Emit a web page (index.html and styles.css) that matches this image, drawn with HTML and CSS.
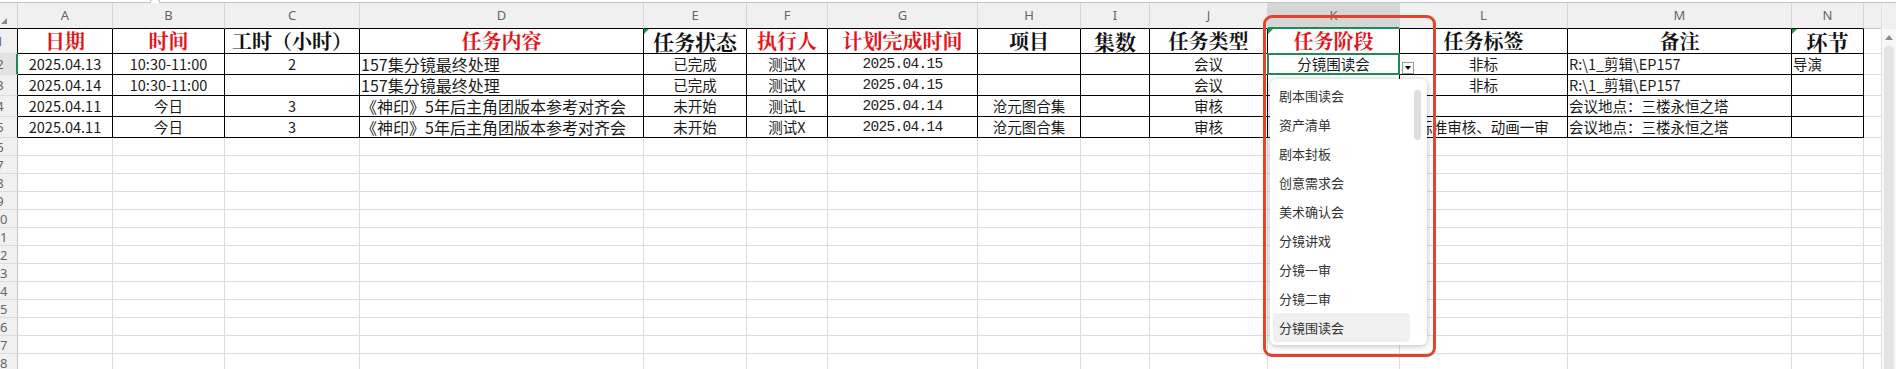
FILE: index.html
```html
<!DOCTYPE html>
<html lang="zh-CN">
<head>
<meta charset="utf-8">
<title>任务表</title>
<link rel="stylesheet" href="styles.css">
</head>
<body>
<div class="app">
  <div class="formula-edge"><span class="notch"></span></div>
  <div class="main">
    <div class="sheet">
      <!-- column header -->
      <div class="corner"><span class="corner-tri"></span></div>
      <div class="ch t">A</div><div class="ch t">B</div><div class="ch t">C</div><div class="ch t">D</div>
      <div class="ch t">E</div><div class="ch t">F</div><div class="ch t">G</div><div class="ch t">H</div>
      <div class="ch t">I</div><div class="ch t">J</div><div class="ch t sel">K</div><div class="ch t">L</div>
      <div class="ch t">M</div><div class="ch t">N</div><div class="ch fill"></div>

      <!-- row 1 -->
      <div class="rh t"><span>1</span></div>
      <div class="c t hd red">日期</div>
      <div class="c t hd red">时间</div>
      <div class="c t hd">工时（小时）</div>
      <div class="c t hd red">任务内容</div>
      <div class="c t hd big flag">任务状态</div>
      <div class="c t hd red">执行人</div>
      <div class="c t hd red">计划完成时间</div>
      <div class="c t hd">项目</div>
      <div class="c t hd big">集数</div>
      <div class="c t hd">任务类型</div>
      <div class="c t hd red flag selcol">任务阶段</div>
      <div class="c t hd">任务标签</div>
      <div class="c t hd">备注</div>
      <div class="c t hd big flag">环节</div>
      <div class="c fill"></div>

      <!-- row 2 -->
      <div class="rh t selrow"><span>2</span></div>
      <div class="c t d">2025.04.13</div>
      <div class="c t d">10:30-11:00</div>
      <div class="c t d">2</div>
      <div class="c t d left wide">157集分镜最终处理</div>
      <div class="c t d">已完成</div>
      <div class="c t d">测试X</div>
      <div class="c t d mono">2025.04.15</div>
      <div class="c t d"></div>
      <div class="c t d"></div>
      <div class="c t d">会议</div>
      <div class="c t d active">分镜围读会
        <span class="dd-btn"><span class="dd-caret"></span></span>
        <div class="dd-list">
          <div class="dd-item">剧本围读会</div>
          <div class="dd-item">资产清单</div>
          <div class="dd-item">剧本封板</div>
          <div class="dd-item">创意需求会</div>
          <div class="dd-item">美术确认会</div>
          <div class="dd-item">分镜讲戏</div>
          <div class="dd-item">分镜一审</div>
          <div class="dd-item">分镜二审</div>
          <div class="dd-item on">分镜围读会</div>
          <span class="dd-thumb"></span>
        </div>
      </div>
      <div class="c t d">非标</div>
      <div class="c t d left">R:\1_剪辑\EP157</div>
      <div class="c t d left">导演</div>
      <div class="c fill"></div>

      <!-- row 3 -->
      <div class="rh t"><span>3</span></div>
      <div class="c t d">2025.04.14</div>
      <div class="c t d">10:30-11:00</div>
      <div class="c t d"></div>
      <div class="c t d left wide">157集分镜最终处理</div>
      <div class="c t d">已完成</div>
      <div class="c t d">测试X</div>
      <div class="c t d mono">2025.04.15</div>
      <div class="c t d"></div>
      <div class="c t d"></div>
      <div class="c t d">会议</div>
      <div class="c t d"></div>
      <div class="c t d">非标</div>
      <div class="c t d left">R:\1_剪辑\EP157</div>
      <div class="c t d left"></div>
      <div class="c fill"></div>

      <!-- row 4 -->
      <div class="rh t"><span>4</span></div>
      <div class="c t d">2025.04.11</div>
      <div class="c t d">今日</div>
      <div class="c t d">3</div>
      <div class="c t d left wide">《神印》5年后主角团版本参考对齐会</div>
      <div class="c t d">未开始</div>
      <div class="c t d">测试L</div>
      <div class="c t d mono">2025.04.14</div>
      <div class="c t d">沧元图合集</div>
      <div class="c t d"></div>
      <div class="c t d">审核</div>
      <div class="c t d"></div>
      <div class="c t d"></div>
      <div class="c t d left">会议地点：三楼永恒之塔</div>
      <div class="c t d left"></div>
      <div class="c fill"></div>

      <!-- row 5 -->
      <div class="rh t"><span>5</span></div>
      <div class="c t d">2025.04.11</div>
      <div class="c t d">今日</div>
      <div class="c t d">3</div>
      <div class="c t d left wide">《神印》5年后主角团版本参考对齐会</div>
      <div class="c t d">未开始</div>
      <div class="c t d">测试X</div>
      <div class="c t d mono">2025.04.14</div>
      <div class="c t d">沧元图合集</div>
      <div class="c t d"></div>
      <div class="c t d">审核</div>
      <div class="c t d"></div>
      <div class="c t d">标准审核、动画一审</div>
      <div class="c t d left">会议地点：三楼永恒之塔</div>
      <div class="c t d left"></div>
      <div class="c fill"></div>

      <!-- empty rows 6-18 -->
      <div class="rh"><span>6</span></div><div class="c"></div><div class="c"></div><div class="c"></div><div class="c"></div><div class="c"></div><div class="c"></div><div class="c"></div><div class="c"></div><div class="c"></div><div class="c"></div><div class="c"></div><div class="c"></div><div class="c"></div><div class="c"></div><div class="c fill"></div>
      <div class="rh"><span>7</span></div><div class="c"></div><div class="c"></div><div class="c"></div><div class="c"></div><div class="c"></div><div class="c"></div><div class="c"></div><div class="c"></div><div class="c"></div><div class="c"></div><div class="c"></div><div class="c"></div><div class="c"></div><div class="c"></div><div class="c fill"></div>
      <div class="rh"><span>8</span></div><div class="c"></div><div class="c"></div><div class="c"></div><div class="c"></div><div class="c"></div><div class="c"></div><div class="c"></div><div class="c"></div><div class="c"></div><div class="c"></div><div class="c"></div><div class="c"></div><div class="c"></div><div class="c"></div><div class="c fill"></div>
      <div class="rh"><span>9</span></div><div class="c"></div><div class="c"></div><div class="c"></div><div class="c"></div><div class="c"></div><div class="c"></div><div class="c"></div><div class="c"></div><div class="c"></div><div class="c"></div><div class="c"></div><div class="c"></div><div class="c"></div><div class="c"></div><div class="c fill"></div>
      <div class="rh"><span>10</span></div><div class="c"></div><div class="c"></div><div class="c"></div><div class="c"></div><div class="c"></div><div class="c"></div><div class="c"></div><div class="c"></div><div class="c"></div><div class="c"></div><div class="c"></div><div class="c"></div><div class="c"></div><div class="c"></div><div class="c fill"></div>
      <div class="rh"><span>11</span></div><div class="c"></div><div class="c"></div><div class="c"></div><div class="c"></div><div class="c"></div><div class="c"></div><div class="c"></div><div class="c"></div><div class="c"></div><div class="c"></div><div class="c"></div><div class="c"></div><div class="c"></div><div class="c"></div><div class="c fill"></div>
      <div class="rh"><span>12</span></div><div class="c"></div><div class="c"></div><div class="c"></div><div class="c"></div><div class="c"></div><div class="c"></div><div class="c"></div><div class="c"></div><div class="c"></div><div class="c"></div><div class="c"></div><div class="c"></div><div class="c"></div><div class="c"></div><div class="c fill"></div>
      <div class="rh"><span>13</span></div><div class="c"></div><div class="c"></div><div class="c"></div><div class="c"></div><div class="c"></div><div class="c"></div><div class="c"></div><div class="c"></div><div class="c"></div><div class="c"></div><div class="c"></div><div class="c"></div><div class="c"></div><div class="c"></div><div class="c fill"></div>
      <div class="rh"><span>14</span></div><div class="c"></div><div class="c"></div><div class="c"></div><div class="c"></div><div class="c"></div><div class="c"></div><div class="c"></div><div class="c"></div><div class="c"></div><div class="c"></div><div class="c"></div><div class="c"></div><div class="c"></div><div class="c"></div><div class="c fill"></div>
      <div class="rh"><span>15</span></div><div class="c"></div><div class="c"></div><div class="c"></div><div class="c"></div><div class="c"></div><div class="c"></div><div class="c"></div><div class="c"></div><div class="c"></div><div class="c"></div><div class="c"></div><div class="c"></div><div class="c"></div><div class="c"></div><div class="c fill"></div>
      <div class="rh"><span>16</span></div><div class="c"></div><div class="c"></div><div class="c"></div><div class="c"></div><div class="c"></div><div class="c"></div><div class="c"></div><div class="c"></div><div class="c"></div><div class="c"></div><div class="c"></div><div class="c"></div><div class="c"></div><div class="c"></div><div class="c fill"></div>
      <div class="rh"><span>17</span></div><div class="c"></div><div class="c"></div><div class="c"></div><div class="c"></div><div class="c"></div><div class="c"></div><div class="c"></div><div class="c"></div><div class="c"></div><div class="c"></div><div class="c"></div><div class="c"></div><div class="c"></div><div class="c"></div><div class="c fill"></div>
      <div class="rh"><span>18</span></div><div class="c"></div><div class="c"></div><div class="c"></div><div class="c"></div><div class="c"></div><div class="c"></div><div class="c"></div><div class="c"></div><div class="c"></div><div class="c"></div><div class="c"></div><div class="c"></div><div class="c"></div><div class="c"></div><div class="c fill"></div>
    </div>
    <div class="vscroll">
      <div class="vs-head"></div>
      <div class="vs-track">
        <span class="vs-up"></span>
        <span class="vs-thumb"></span>
      </div>
    </div>
  </div>
  <div class="annotation"></div>
</div>
</body>
</html>
```

FILE: styles.css
```css
* { box-sizing: border-box; }
html, body { margin: 0; padding: 0; background: #fff; }
body {
  width: 1896px;
  height: 369px;
  overflow: hidden;
  font-family: "Noto Sans CJK SC", "Noto Sans", sans-serif;
  color: #111;
}

.app {
  position: relative;
  display: flex;
  flex-direction: column;
  height: 369px;
}

.formula-edge {
  position: relative;
  height: 3px;
  border-bottom: 1px solid #c4c4c4;
  background: #fff;
}
.notch {
  position: absolute;
  left: 150px;
  top: -1px;
  width: 10px;
  height: 4px;
  border-left: 1px solid #c4c4c4;
  border-right: 1px solid #c4c4c4;
  border-top: 1px solid #c4c4c4;
  border-radius: 3px 3px 0 0;
  background: #fff;
}

.main {
  display: flex;
  flex: 1;
  min-height: 0;
}

.sheet {
  flex: 1;
  display: grid;
  grid-template-columns: 18px 95px 112px 135px 284px 103px 81px 150px 103px 69px 118px 132px 168px 224px 72px 1fr;
  grid-template-rows: 26px 25px repeat(4, 21px) repeat(13, 18px);
  overflow: hidden;
}

/* headers */
.corner {
  position: relative;
  background: #f0f0f0;
  border-right: 1px solid #d0d0d0;
  border-bottom: 1px solid #000;
}
.corner-tri {
  position: absolute;
  left: 1px;
  bottom: 4px;
  width: 0;
  height: 0;
  border-left: 6px solid transparent;
  border-bottom: 6px solid #8a8a8a;
}
.ch {
  background: #f0f0f0;
  border-right: 1px solid #d6d6d6;
  border-bottom: 1px solid #c8c8c8;
  color: #666;
  font-family: "Noto Sans", "Noto Sans CJK SC", sans-serif;
  font-size: 13px;
  line-height: 25px;
  text-align: center;
}
.ch.t { border-bottom-color: #000; }
.ch.sel {
  background: #d6d6d6;
  border-bottom: 2px solid #1f8a55;
}
.ch.fill { border-right: none; }

.rh {
  background: #f0f0f0;
  border-right: 1px solid #c8c8c8;
  border-bottom: 1px solid #dcdcdc;
  color: #666;
  font-family: "Noto Sans", sans-serif;
  font-size: 13px;
  overflow: hidden;
  display: flex;
  align-items: center;
}
.rh span {
  flex: none;
  width: 30px;
  margin-left: -15px;
  text-align: center;
}
.rh.t { border-right-color: #000; border-bottom-color: #dcdcdc; }
.rh.selrow {
  background: #e2e2e2;
  border-right: 2px solid #1f8a55;
}

/* cells */
.c {
  position: relative;
  border-right: 1px solid #dcdcdc;
  border-bottom: 1px solid #dcdcdc;
  white-space: nowrap;
  text-align: center;
}
.c.t {
  border-right-color: #000;
  border-bottom-color: #000;
}
.c.fill { border-right: none; }

.hd {
  font-family: "Noto Serif CJK SC", "Noto Sans CJK SC", serif;
  font-weight: 700;
  font-size: 20px;
  line-height: 24px;
  color: #111;
}
.hd.big { font-size: 21px; }
.hd.red { color: #e3141b; }
.flag::before {
  content: "";
  position: absolute;
  left: 0;
  top: 0;
  border-top: 5px solid #1f9a4a;
  border-right: 5px solid transparent;
}

.d {
  font-size: 14.5px;
  line-height: 20px;
  color: #1a1a1a;
}
.d.left { text-align: left; padding-left: 1px; }
.d.wide { font-size: 16px; }
.d.mono {
  font-family: "Liberation Mono", "DejaVu Sans Mono", monospace;
  font-size: 14.5px;
  letter-spacing: -0.7px;
  color: #222;
}

/* active cell + dropdown */
.active { z-index: 10; }
.active::after {
  content: "";
  position: absolute;
  left: -1px;
  top: -1px;
  right: -1px;
  bottom: -1px;
  border: 2px solid #1f8a55;
  pointer-events: none;
}
.dd-btn {
  position: absolute;
  left: 134px;
  top: 8px;
  width: 12px;
  height: 12px;
  background: #fff;
  border: 1px solid #9a9a9a;
  display: flex;
  align-items: center;
  justify-content: center;
}
.dd-caret {
  width: 0;
  height: 0;
  border-left: 3px solid transparent;
  border-right: 3px solid transparent;
  border-top: 4px solid #111;
}
.dd-list {
  position: absolute;
  left: 2px;
  top: 25px;
  width: 157px;
  height: 266px;
  padding: 2px 17px 0 3px;
  background: #fff;
  border-radius: 6px;
  box-shadow: 0 1px 6px rgba(0, 0, 0, 0.28);
  text-align: left;
}
.dd-item {
  height: 29px;
  line-height: 29px;
  padding-left: 6px;
  font-size: 13px;
  color: #333;
  border-radius: 4px;
}
.dd-item.on { background: #f0f0f0; }
.dd-thumb {
  position: absolute;
  right: 6px;
  top: 11px;
  width: 7px;
  height: 50px;
  border-radius: 4px;
  background: #dedede;
}

/* vertical scrollbar */
.vscroll {
  width: 15px;
  display: flex;
  flex-direction: column;
  border-left: 1px solid #e0e0e0;
}
.vs-head {
  height: 26px;
  background: #f0f0f0;
}
.vs-track {
  position: relative;
  flex: 1;
  background: #f7f7f7;
}
.vs-up {
  position: absolute;
  left: 3px;
  top: 6px;
  width: 0;
  height: 0;
  border-left: 4px solid transparent;
  border-right: 4px solid transparent;
  border-bottom: 5px solid #8a8a8a;
}
.vs-thumb {
  position: absolute;
  left: 2px;
  right: 2px;
  top: 17px;
  bottom: 0;
  border-radius: 4px 4px 0 0;
  background: #e4e4e4;
}

/* red annotation frame */
.annotation {
  position: absolute;
  left: 1263px;
  top: 15px;
  width: 173px;
  height: 342px;
  border: 3px solid #e0452f;
  border-radius: 9px;
  pointer-events: none;
  z-index: 20;
}
```
